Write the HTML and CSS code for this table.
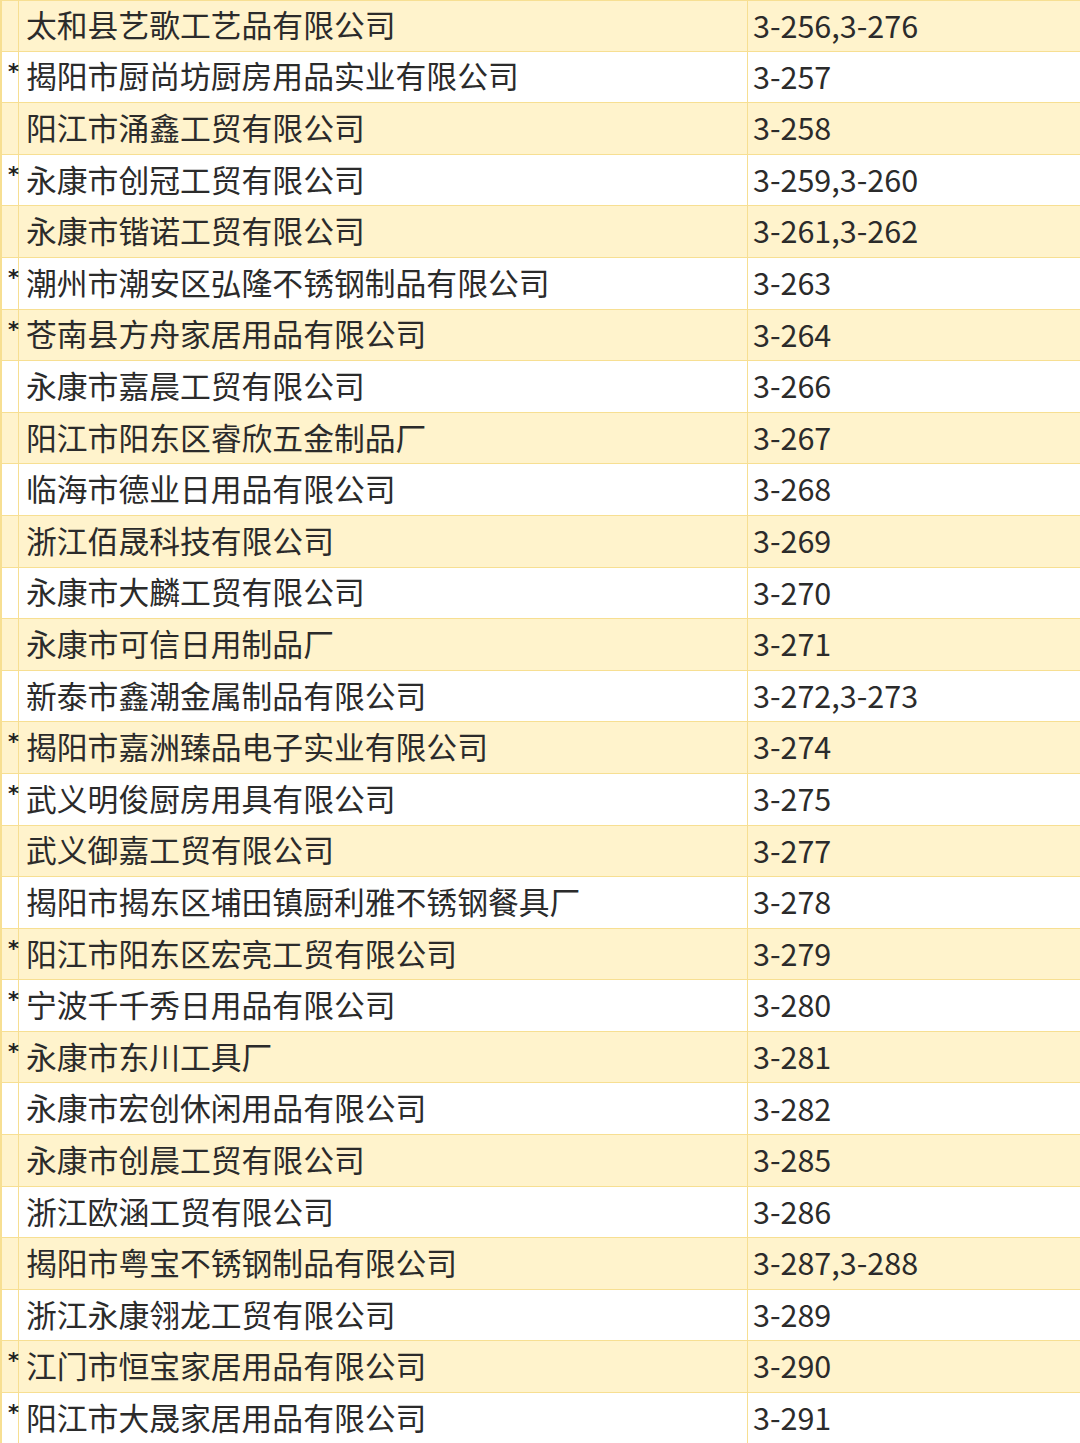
FILE: index.html
```html
<!DOCTYPE html>
<html lang="zh-CN">
<head>
<meta charset="utf-8">
<title>名单</title>
<link rel="stylesheet" href="styles.css">
</head>
<body>
<div class="table">
  <div class="row odd"><div class="mark"></div><div class="name">太和县艺歌工艺品有限公司</div><div class="num">3-256,3-276</div></div>
  <div class="row"><div class="mark">*</div><div class="name">揭阳市厨尚坊厨房用品实业有限公司</div><div class="num">3-257</div></div>
  <div class="row odd"><div class="mark"></div><div class="name">阳江市涌鑫工贸有限公司</div><div class="num">3-258</div></div>
  <div class="row"><div class="mark">*</div><div class="name">永康市创冠工贸有限公司</div><div class="num">3-259,3-260</div></div>
  <div class="row odd"><div class="mark"></div><div class="name">永康市锴诺工贸有限公司</div><div class="num">3-261,3-262</div></div>
  <div class="row"><div class="mark">*</div><div class="name">潮州市潮安区弘隆不锈钢制品有限公司</div><div class="num">3-263</div></div>
  <div class="row odd"><div class="mark">*</div><div class="name">苍南县方舟家居用品有限公司</div><div class="num">3-264</div></div>
  <div class="row"><div class="mark"></div><div class="name">永康市嘉晨工贸有限公司</div><div class="num">3-266</div></div>
  <div class="row odd"><div class="mark"></div><div class="name">阳江市阳东区睿欣五金制品厂</div><div class="num">3-267</div></div>
  <div class="row"><div class="mark"></div><div class="name">临海市德业日用品有限公司</div><div class="num">3-268</div></div>
  <div class="row odd"><div class="mark"></div><div class="name">浙江佰晟科技有限公司</div><div class="num">3-269</div></div>
  <div class="row"><div class="mark"></div><div class="name">永康市大麟工贸有限公司</div><div class="num">3-270</div></div>
  <div class="row odd"><div class="mark"></div><div class="name">永康市可信日用制品厂</div><div class="num">3-271</div></div>
  <div class="row"><div class="mark"></div><div class="name">新泰市鑫潮金属制品有限公司</div><div class="num">3-272,3-273</div></div>
  <div class="row odd"><div class="mark">*</div><div class="name">揭阳市嘉洲臻品电子实业有限公司</div><div class="num">3-274</div></div>
  <div class="row"><div class="mark">*</div><div class="name">武义明俊厨房用具有限公司</div><div class="num">3-275</div></div>
  <div class="row odd"><div class="mark"></div><div class="name">武义御嘉工贸有限公司</div><div class="num">3-277</div></div>
  <div class="row"><div class="mark"></div><div class="name">揭阳市揭东区埔田镇厨利雅不锈钢餐具厂</div><div class="num">3-278</div></div>
  <div class="row odd"><div class="mark">*</div><div class="name">阳江市阳东区宏亮工贸有限公司</div><div class="num">3-279</div></div>
  <div class="row"><div class="mark">*</div><div class="name">宁波千千秀日用品有限公司</div><div class="num">3-280</div></div>
  <div class="row odd"><div class="mark">*</div><div class="name">永康市东川工具厂</div><div class="num">3-281</div></div>
  <div class="row"><div class="mark"></div><div class="name">永康市宏创休闲用品有限公司</div><div class="num">3-282</div></div>
  <div class="row odd"><div class="mark"></div><div class="name">永康市创晨工贸有限公司</div><div class="num">3-285</div></div>
  <div class="row"><div class="mark"></div><div class="name">浙江欧涵工贸有限公司</div><div class="num">3-286</div></div>
  <div class="row odd"><div class="mark"></div><div class="name">揭阳市粤宝不锈钢制品有限公司</div><div class="num">3-287,3-288</div></div>
  <div class="row"><div class="mark"></div><div class="name">浙江永康翎龙工贸有限公司</div><div class="num">3-289</div></div>
  <div class="row odd"><div class="mark">*</div><div class="name">江门市恒宝家居用品有限公司</div><div class="num">3-290</div></div>
  <div class="row"><div class="mark">*</div><div class="name">阳江市大晟家居用品有限公司</div><div class="num">3-291</div></div>
</div>
</body>
</html>
```

FILE: styles.css
```css
html, body {
  margin: 0;
  padding: 0;
  background: #ffffff;
}

body {
  font-family: "Noto Sans CJK SC", "Noto Sans", sans-serif;
  color: #2b2b2b;
  overflow: hidden;
}

.table {
  width: 1080px;
  border-top: 1px solid #f7df92;
  border-left: 2px solid #f7df92;
  box-sizing: border-box;
}

.row {
  display: grid;
  grid-template-columns: 17px 729px 1fr;
  height: 51.6px;
  box-sizing: border-box;
  border-bottom: 1px solid #f7df92;
  background: #ffffff;
}

.row:first-child {
  height: 50.6px;
}

.row.odd {
  background: #fff3cc;
}

.mark {
  border-right: 1px solid #f7df92;
  font-family: "DejaVu Sans", sans-serif;
  font-weight: bold;
  font-size: 21px;
  line-height: 1;
  padding-top: 10px;
  padding-left: 6px;
  box-sizing: border-box;
  color: #1f1f1f;
}

.name {
  border-right: 1px solid #f7df92;
  display: flex;
  align-items: center;
  padding-left: 7px;
  padding-bottom: 2px;
  font-size: 30.8px;
  line-height: 1;
  white-space: nowrap;
}

.num {
  display: flex;
  align-items: center;
  padding-left: 5px;
  padding-bottom: 2px;
  font-size: 30.5px;
  line-height: 1;
  white-space: nowrap;
}
```
